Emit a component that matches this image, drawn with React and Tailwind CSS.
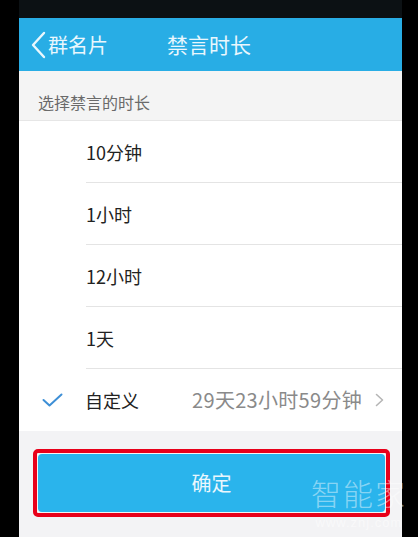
const cjk = { fontFamily: '"Noto Sans CJK SC", "Noto Sans", sans-serif' }

const options = ['10分钟', '1小时', '12小时', '1天']

export default function App() {
  return (
    <div className="w-[418px] h-[537px] bg-black flex overflow-hidden relative" style={cjk}>
      <div className="w-[19px] shrink-0" />
      <div className="w-[383px] flex flex-col">
        <div className="h-[18px] bg-[#0c1114]" />
        <div className="h-[53px] bg-[#28ade5] flex items-center relative">
          <svg className="ml-[10px]" width="18" height="28" viewBox="0 0 18 28">
            <path d="M15 2 L4 14 L15 26" fill="none" stroke="#eaf7fd" strokeWidth="2.4" strokeLinecap="round" strokeLinejoin="round" />
          </svg>
          <span className="text-[20px] text-[#eaf7fd] ml-[1px] leading-none">群名片</span>
          <span className="text-[21px] text-[#eaf7fd] ml-[59px] leading-none">禁言时长</span>
        </div>
        <div className="h-[50px] bg-[#f4f4f4] flex items-end pb-[10px] pl-[19px] border-b border-[#e6e6e6]">
          <span className="text-[16px] text-[#6a6a6a] leading-none">选择禁言的时长</span>
        </div>
        <div className="bg-white flex flex-col">
          {options.map((o) => (
            <div key={o} className="ml-[67px] h-[62px] border-b border-[#e4e4e4] flex items-center">
              <span className="text-[18px] text-[#222] leading-none">{o}</span>
            </div>
          ))}
          <div className="h-[62px] flex items-center">
            <svg className="ml-[23px]" width="21" height="14" viewBox="0 0 21 14">
              <path d="M1.5 7 L7.5 12.5 L19.5 1.5" fill="none" stroke="#3d8fd6" strokeWidth="2" strokeLinecap="round" strokeLinejoin="round" />
            </svg>
            <span className="ml-[22px] text-[18px] text-[#222] leading-none">自定义</span>
            <span className="ml-auto text-[20px] text-[#8a8a8a] leading-none tracking-[0.3px]">29天23小时59分钟</span>
            <svg className="ml-[13px] mr-[18px]" width="9" height="14" viewBox="0 0 9 14">
              <path d="M1.5 1.5 L7.5 7 L1.5 12.5" fill="none" stroke="#b5b5b5" strokeWidth="1.6" strokeLinecap="round" strokeLinejoin="round" />
            </svg>
          </div>
        </div>
        <div className="flex-1 bg-[#f3f3f5] pt-[18px] pl-[14px]">
          <div className="w-[357px] h-[68px] border-[4px] border-[#e8001a] rounded-[5px] p-[1px] bg-[#f4f4f4]">
            <div className="h-full bg-[#2ab4ec] rounded-[4px] flex items-center justify-center">
              <span className="text-[20px] text-[#eaf7fd] leading-none">确定</span>
            </div>
          </div>
        </div>
      </div>
      <div className="absolute left-[311px] top-[477px] flex flex-col items-center pointer-events-none">
        <span className="text-[30px] leading-none text-white/45 tracking-[2px] font-light">智能家</span>
        <span className="mt-[9px] text-[13px] leading-none text-white/50 tracking-[1px]" style={{ fontFamily: '"Liberation Sans", sans-serif' }}>www.znj.com</span>
      </div>
      <div className="w-[16px] shrink-0" />
    </div>
  )
}
